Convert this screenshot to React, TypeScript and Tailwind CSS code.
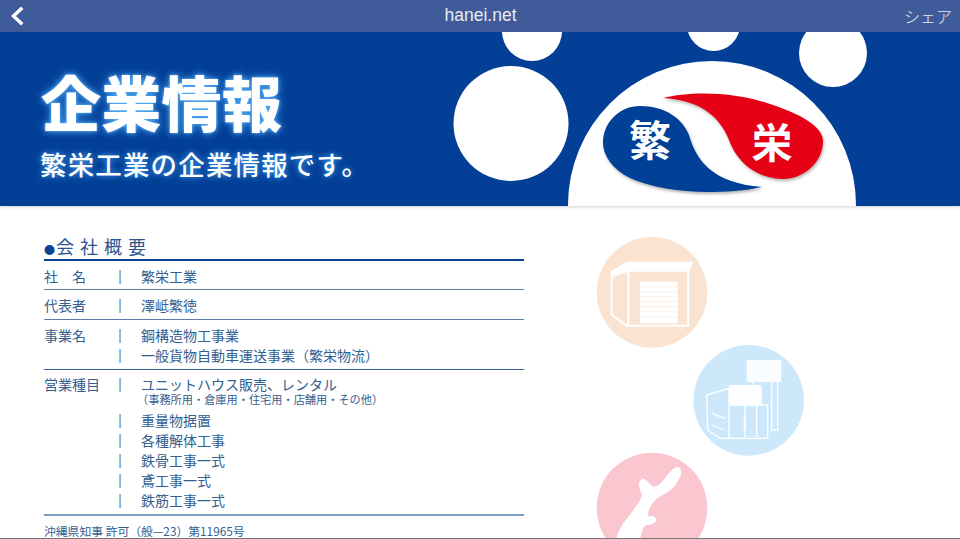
const jp = "font-['Noto_Sans_CJK_JP','Noto_Sans',sans-serif]";

function Row({ label, children, className = "", tight = false }: { label?: string; children: React.ReactNode; className?: string; tight?: boolean }) {
  return (
    <div className={`grid grid-cols-[69px_14px_1fr] gap-x-0 text-[14px] ${tight ? "leading-[18px]" : "leading-[20px]"} ${className}`}>
      <span>{label}</span>
      <span className="text-center text-[#6d90ba] font-['Liberation_Sans',sans-serif] text-[15px] font-light">|</span>
      <div className="pl-[14px]">{children}</div>
    </div>
  );
}

function HeroArt() {
  return (
    <svg className="absolute inset-0" width="960" height="174" viewBox="0 32 960 174">
      <defs>
        <filter id="logoShadow" x="-10%" y="-10%" width="120%" height="125%">
          <feDropShadow dx="1" dy="2" stdDeviation="1.5" floodColor="#000" floodOpacity="0.3" />
        </filter>
      </defs>
      <g fill="#fff">
        <circle cx="511" cy="123.5" r="57.5" />
        <circle cx="532" cy="31" r="30" />
        <circle cx="713.5" cy="24.5" r="26.5" />
        <circle cx="833" cy="53" r="34" />
        <circle cx="712" cy="205" r="144" />
      </g>
      <g filter="url(#logoShadow)">
        <path fill="#033f97" d="M762 187C745 191 725 192 707 192C680 192 650 187 630 178C612 169 603 155 603 143C603 122 620 106 640 106C665 106 682 118 689 135C696 160 712 183 762 187Z" />
        <path fill="#e60012" d="M663 98C690 91 735 91 773 105C805 116 823 128 823 141C823 163 803 179 783 179C760 179 738 165 729 140C718 112 695 100 663 98Z" />
      </g>
      <text x="650" y="156" textAnchor="middle" fontSize="42" fontWeight="700" fill="#fff" fontFamily="'Noto Sans CJK JP',sans-serif">繁</text>
      <text x="772" y="158" textAnchor="middle" fontSize="41" fontWeight="700" fill="#fff" fontFamily="'Noto Sans CJK JP',sans-serif">栄</text>
    </svg>
  );
}

function SideArt() {
  return (
    <svg width="230" height="309" viewBox="0 0 690 927" className="block shrink-0">
      <circle cx="201" cy="187" r="166" fill="#fae3d0" />
      <g fill="none" stroke="#fff" strokeWidth="6">
        <path d="M80 125V255L125 287H310V125M130 125V285" />
      </g>
      <path fill="#fff" d="M75 125L125 95H325L313 125H130L82 142Z" />
      <rect x="165" y="155" width="113" height="125" fill="#fff" />
      <g stroke="#fae3d0" strokeWidth="1.5">
        <path d="M165 170H278M165 185H278M165 200H278M165 215H278M165 230H278M165 245H278M165 260H278" />
      </g>

      <circle cx="491" cy="511" r="166" fill="#cde8fa" />
      <g fill="none" stroke="#fff" strokeWidth="4">
        <path d="M365 495L432 475V625H405L368 600Z" />
        <path d="M432 525H548V625H432" />
        <path d="M480 525V622M515 525V622" />
        <path d="M505 455V465M560 455V600H578V455" />
        <path d="M380 550L420 565M380 585L420 600" />
      </g>
      <rect x="485" y="390" width="104" height="66" rx="5" fill="#fff" fillOpacity="0.9" />
      <rect x="432" y="465" width="98" height="60" rx="4" fill="#fff" fillOpacity="0.95" />
      <path d="M476 565h6v30h-6z" fill="#fff" />

      <circle cx="201" cy="834" r="166" fill="#fac6d0" />
      <path fill="#fff" d="M285 715C275 705 262 715 240 745C228 762 215 772 205 770C192 762 182 742 170 748C158 755 160 770 170 790C172 805 160 820 130 860C112 882 98 905 94 927H165C172 905 172 890 185 885C198 884 215 880 214 868C210 855 198 858 190 860C188 842 195 825 220 802C240 790 262 782 275 758C285 742 295 728 285 715Z" />
    </svg>
  );
}

export default function App() {
  return (
    <div className={`relative w-[960px] h-[539px] overflow-hidden bg-white ${jp}`}>
      <header className="h-[32px] bg-[#3f5b99] grid grid-cols-[1fr_auto_1fr] items-center pl-[9px] pr-[8px] text-[#e8ebf3]">
        <svg width="16" height="20" viewBox="0 0 16 20" fill="none" stroke="#fff" strokeWidth="3.4" strokeLinecap="square">
          <path d="M12 3L4.5 10L12 17" />
        </svg>
        <span className="text-[17.5px] font-['Liberation_Sans',sans-serif] leading-none">hanei.net</span>
        <span className="text-[16px] leading-none font-light text-right">シェア</span>
      </header>

      <section className="relative h-[174px] bg-[#033f97] overflow-hidden shadow-[0_1px_3px_rgba(0,0,0,0.18)]">
        <HeroArt />
        <div className="relative pl-[41px] pt-[26px] text-white">
          <h1 className="text-[60px] leading-[86px] font-black tracking-[0.3px] [text-shadow:0_0_8px_#4aa8f8,0_0_3px_#7cc0ff]">企業情報</h1>
          <p className="text-[26.5px] leading-[36px] -ml-[1px] mt-[2px] font-medium tracking-[1.15px] whitespace-nowrap [text-shadow:0_0_6px_#4aa8f8]">繁栄工業の企業情報です。</p>
        </div>
      </section>

      <main className="flex pl-[44px] pt-[27px] text-[#33608f]">
        <div className="w-[480px] shrink-0">
          <h2 className="text-[18px] leading-[26px] h-[26px] text-[#2a5590] tracking-[6px] whitespace-nowrap">
            <span className="tracking-normal text-[#0a4595] text-[11px] mr-[1px]">●</span>会社概要
          </h2>
          <div className="border-b-[2.5px] border-[#0b4696]" />
          <Row label="社　名" className="pt-[5px] pb-[3px] border-b border-[#5a7ca8]">繁栄工業</Row>
          <Row label="代表者" className="pt-[5px] pb-[4px] border-b border-[#5a7ca8]">澤岻繁徳</Row>
          <div className="pt-[5px] pb-[4px] border-b border-[#2f62a3]">
            <Row label="事業名">鋼構造物工事業</Row>
            <Row>一般貨物自動車運送事業（繁栄物流）</Row>
          </div>
          <div className="pt-[5px] pb-[4px] border-b-2 border-[#7d9cc4]">
            <Row label="営業種目" tight>
              ユニットハウス販売、レンタル
              <div className="text-[11.2px] leading-[12px] -ml-[4px] mb-[5px] whitespace-nowrap">（事務所用・倉庫用・住宅用・店舗用・その他）</div>
            </Row>
            <Row>重量物据置</Row>
            <Row>各種解体工事</Row>
            <Row>鉄骨工事一式</Row>
            <Row>鳶工事一式</Row>
            <Row>鉄筋工事一式</Row>
          </div>
          <p className="text-[11.8px] leading-[16px] mt-[7px] whitespace-nowrap">沖縄県知事 許可（般—23）第11965号</p>
        </div>
        <div className="ml-[61px] mt-[-3px]">
          <SideArt />
        </div>
      </main>

      <div className="absolute left-0 right-0 bottom-0 h-px bg-[#777]" />
    </div>
  );
}
